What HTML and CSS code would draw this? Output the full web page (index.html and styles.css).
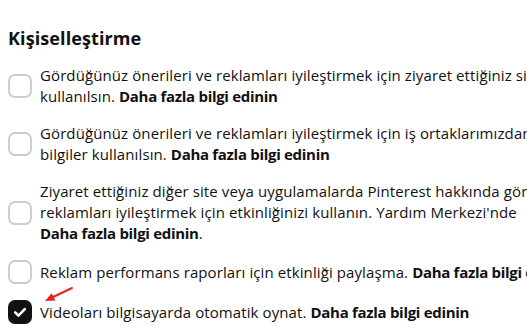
FILE: index.html
```html
<!DOCTYPE html>
<html lang="tr">
<head>
<meta charset="utf-8">
<title>Kişiselleştirme</title>
<link rel="stylesheet" href="styles.css">
</head>
<body>
<main class="page">
  <h2 class="title">Kişiselleştirme</h2>
  <ul class="options">
    <li class="option">
      <span class="box"></span>
      <p class="label">Gördüğünüz önerileri ve reklamları iyileştirmek için ziyaret ettiğiniz sitelerden alınan bilgiler<br>kullanılsın. <b>Daha fazla bilgi edinin</b></p>
    </li>
    <li class="option">
      <span class="box"></span>
      <p class="label">Gördüğünüz önerileri ve reklamları iyileştirmek için iş ortaklarımızdan alınan<br>bilgiler kullanılsın. <b>Daha fazla bilgi edinin</b></p>
    </li>
    <li class="option">
      <span class="box"></span>
      <p class="label">Ziyaret ettiğiniz diğer site veya uygulamalarda Pinterest hakkında gördüğünüz<br>reklamları iyileştirmek için etkinliğinizi kullanın. Yardım Merkezi'nde<br><b>Daha fazla bilgi edinin</b>.</p>
    </li>
    <li class="option">
      <span class="box"></span>
      <p class="label">Reklam performans raporları için etkinliği paylaşma. <b>Daha fazla bilgi edinin</b></p>
    </li>
    <li class="option">
      <span class="box checked">
        <svg viewBox="0 0 24 24" width="24" height="24" aria-hidden="true"><polyline points="7.2,12.4 10.4,15.6 16.8,9.2" fill="none" stroke="#fff" stroke-width="2.6" stroke-linecap="round" stroke-linejoin="round"/></svg>
      </span>
      <p class="label">Videoları bilgisayarda otomatik oynat. <b>Daha fazla bilgi edinin</b></p>
      <svg class="arrow" viewBox="0 0 36 22" width="36" height="22" aria-hidden="true">
        <line x1="31" y1="4" x2="10" y2="14" stroke="#e8231f" stroke-width="2" stroke-linecap="round"/>
        <polygon points="4,17 14.5,16.6 10.6,9.2" fill="#e8231f"/>
      </svg>
    </li>
  </ul>
</main>
</body>
</html>
```
FILE: styles.css
```css
html, body {
  margin: 0;
  padding: 0;
  overflow: hidden;
  background: #ffffff;
}

.page {
  padding: 26px 0 0 8px;
  overflow: hidden;
  font-family: "Open Sans", "Noto Sans", "Liberation Sans", sans-serif;
  color: #111111;
}

.title {
  margin: 0;
  font-size: 18px;
  line-height: 24px;
  font-weight: 700;
  color: #111111;
  letter-spacing: 0.1px;
}

.options {
  list-style: none;
  margin: 15px 0 0 0;
  padding: 0;
  display: flex;
  flex-direction: column;
  gap: 16px;
}

.option {
  position: relative;
  display: flex;
  align-items: center;
  gap: 8px;
}

.box {
  flex: 0 0 auto;
  box-sizing: border-box;
  width: 24px;
  height: 24px;
  border: 2px solid #cdcdcd;
  border-radius: 7px;
  background: #ffffff;
  display: flex;
  align-items: center;
  justify-content: center;
}

.box.checked {
  border: none;
  background: #111111;
}

.box svg {
  display: block;
}

.label {
  margin: 0;
  font-size: 15px;
  line-height: 21px;
  white-space: nowrap;
  letter-spacing: 0.1px;
}

.label b {
  font-weight: 700;
  letter-spacing: -0.3px;
}

.arrow {
  position: absolute;
  left: 33px;
  top: -16px;
}
```
